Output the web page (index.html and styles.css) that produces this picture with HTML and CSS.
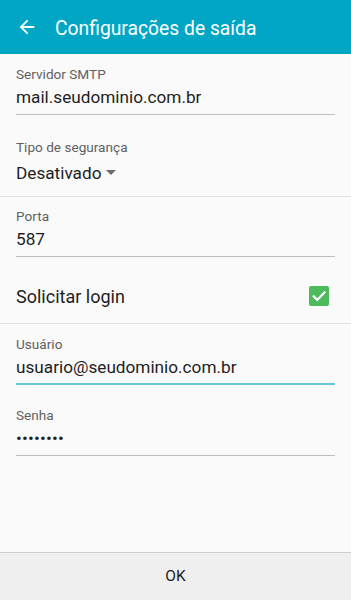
FILE: index.html
```html
<!DOCTYPE html>
<html lang="pt-BR">
<head>
<meta charset="utf-8">
<title>Configurações de saída</title>
<link rel="stylesheet" href="styles.css">
</head>
<body>
<div class="screen">
  <header class="appbar">
    <svg class="back" viewBox="0 0 24 24" width="22" height="22" aria-hidden="true"><path fill="#ffffff" d="M20 11H7.83l5.59-5.59L12 4l-8 8 8 8 1.41-1.41L7.83 13H20v-2z"/></svg>
    <h1 class="title">Configurações de saída</h1>
  </header>
  <main class="content">
    <section class="group">
      <div class="field f-smtp">
        <div class="label">Servidor SMTP</div>
        <div class="value">mail.seudominio.com.br</div>
      </div>
      <div class="select">
        <div class="label">Tipo de segurança</div>
        <div class="value select-value">Desativado<span class="caret"></span></div>
      </div>
    </section>
    <section class="group">
      <div class="field f-port">
        <div class="label">Porta</div>
        <div class="value">587</div>
      </div>
      <div class="check-row">
        <span class="check-label">Solicitar login</span>
        <span class="checkbox"><svg viewBox="0 0 20 20" width="20" height="20" aria-hidden="true"><path d="M4.6 10.3l3.6 3.6 7.2-7.4" fill="none" stroke="#ffffff" stroke-width="2.2" stroke-linecap="square"/></svg></span>
      </div>
    </section>
    <section class="group last">
      <div class="field f-user focused">
        <div class="label">Usuário</div>
        <div class="value">usuario@seudominio.com.br</div>
      </div>
      <div class="field f-pass">
        <div class="label">Senha</div>
        <div class="value dots">••••••••</div>
      </div>
    </section>
  </main>
  <footer class="bottombar">OK</footer>
</div>
</body>
</html>
```

FILE: styles.css
```css
html, body {
  margin: 0;
  padding: 0;
}
body {
  background: #fafafa;
  font-family: Roboto, "Noto Sans", "Liberation Sans", sans-serif;
  color: #212121;
}
.screen {
  width: 351px;
  height: 600px;
  display: flex;
  flex-direction: column;
  background: #fafafa;
}
.appbar {
  height: 54px;
  flex: 0 0 54px;
  background: #02a6c5;
  display: flex;
  align-items: center;
  padding-left: 16px;
  box-sizing: border-box;
}
.back {
  display: block;
  flex: 0 0 22px;
}
.title {
  margin: 3px 0 0 17px;
  font-size: 19.3px;
  line-height: 24px;
  font-weight: 400;
  color: #ffffff;
  white-space: nowrap;
}
.content {
  flex: 1 1 auto;
}
.group {
  border-bottom: 1px solid #e3e3e3;
}
.group.last {
  border-bottom: none;
}
.field {
  margin: 0 16px;
  padding-bottom: 6.5px;
  border-bottom: 1px solid #bdbdbd;
}
.label {
  font-size: 13.6px;
  line-height: 16px;
  color: #616161;
}
.value {
  font-size: 17.2px;
  line-height: 22px;
  margin-top: 3.5px;
  color: #1e1e1e;
  white-space: nowrap;
}
.f-smtp { padding-top: 12px; }
.select {
  margin: 0 16px;
  padding-top: 24px;
  padding-bottom: 12.5px;
}
.select-value {
  margin-top: 6.5px;
  display: flex;
  align-items: center;
}
.caret {
  display: inline-block;
  width: 0;
  height: 0;
  margin-left: 5px;
  border-left: 5.5px solid transparent;
  border-right: 5.5px solid transparent;
  border-top: 5.5px solid #6a6a6a;
}
.f-port { padding-top: 11px; }
.check-row {
  padding: 28px 16px 14px 16px;
  height: 24px;
  display: flex;
  align-items: center;
  justify-content: space-between;
}
.check-label {
  font-size: 18px;
  line-height: 24px;
  color: #1e1e1e;
}
.checkbox {
  width: 20px;
  height: 20px;
  border-radius: 2px;
  background: #4dbb5c;
  margin-right: 6px;
  margin-bottom: 3px;
  display: block;
}
.checkbox svg { display: block; }
.f-user {
  padding-top: 12px;
  padding-bottom: 5.5px;
}
.focused {
  border-bottom: 2px solid #63c8df;
}
.f-pass {
  padding-top: 22.4px;
}
.dots {
  letter-spacing: 0.2px;
}
.bottombar {
  flex: 0 0 48px;
  height: 48px;
  box-sizing: border-box;
  border-top: 1px solid #cfcfcf;
  background: #efefef;
  text-align: center;
  font-size: 15.5px;
  line-height: 47px;
  color: #1e1e1e;
}
```
